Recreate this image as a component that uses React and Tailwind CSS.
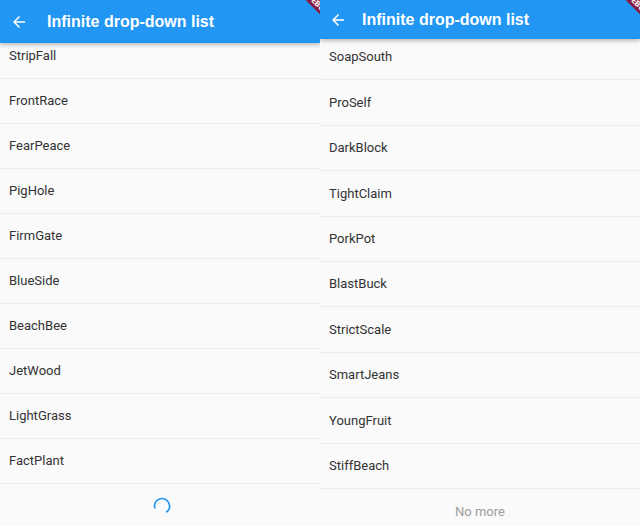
import React from "react";

const leftItems = ["StripFall", "FrontRace", "FearPeace", "PigHole", "FirmGate", "BlueSide", "BeachBee", "JetWood", "LightGrass", "FactPlant"];
const rightItems = ["SoapSouth", "ProSelf", "DarkBlock", "TightClaim", "PorkPot", "BlastBuck", "StrictScale", "SmartJeans", "YoungFruit", "StiffBeach"];

const BackArrow = () => (
  <svg viewBox="0 0 24 24" className="w-[18px] h-[18px]" fill="white">
    <path d="M20 11H7.83l5.59-5.59L12 4l-8 8 8 8 1.41-1.41L7.83 13H20v-2z" />
  </svg>
);

const DebugBanner = () => (
  <div className="absolute top-0 right-0 w-[40px] h-[40px] overflow-hidden pointer-events-none">
    <div className="absolute top-[-1.5px] right-[-28px] w-[60px] h-[11px] bg-[#8b1a3a] rotate-45 flex items-center justify-center text-white text-[8px] font-bold leading-none">
      DEBUG
    </div>
  </div>
);

const AppBar = ({ height, arrowPad }) => (
  <div className={`relative z-10 flex items-center bg-[#2196f3] shadow-[0_2px_4px_rgba(0,0,0,0.25)] shrink-0 ${height}`}>
    <div className={arrowPad}>
      <BackArrow />
    </div>
    <div className="text-white font-bold text-[16px]" style={{ fontFamily: '"Liberation Sans", Arial, sans-serif' }}>
      Infinite drop-down list
    </div>
    <DebugBanner />
  </div>
);

const Row = ({ text, rowH }) => (
  <div className={`flex items-center px-[9px] border-b border-[#ececec] text-[13px] text-[#333] ${rowH}`}>
    {text}
  </div>
);

export default function App() {
  return (
    <div className="flex w-[640px] h-[526px] bg-[#fafafa] overflow-hidden" style={{ fontFamily: "Roboto, sans-serif" }}>
      {/* left screen: still loading */}
      <div className="w-[320px] h-full flex flex-col overflow-hidden">
        <AppBar height="h-[43px]" arrowPad="pl-[10px] pr-[19px]" />
        <div className="-mt-[9px]">
          {leftItems.map((t) => (
            <Row key={t} text={t} rowH="h-[45px]" />
          ))}
          <div className="flex justify-center pt-[12px]">
            <svg viewBox="0 0 24 24" className="w-[20px] h-[20px] ml-[4px]">
              <circle cx="12" cy="12" r="9" fill="none" stroke="#2196f3" strokeWidth="2" strokeDasharray="40 100" transform="rotate(160 12 12)" />
            </svg>
          </div>
        </div>
      </div>

      {/* right screen: all loaded */}
      <div className="w-[320px] h-full flex flex-col overflow-hidden">
        <AppBar height="h-[39px]" arrowPad="pl-[9px] pr-[15px]" />
        <div className="-mt-[4px]">
          {rightItems.map((t) => (
            <Row key={t} text={t} rowH="h-[45.4px]" />
          ))}
          <div className="flex justify-center items-center h-[45px] text-[13px] text-[#9e9e9e]">No more</div>
        </div>
      </div>
    </div>
  );
}
